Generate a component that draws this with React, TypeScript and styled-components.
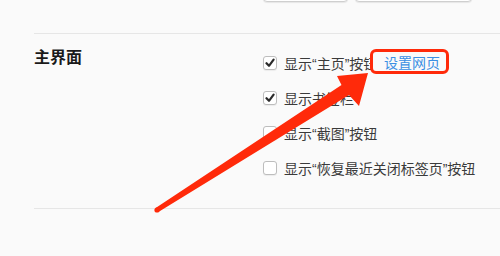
import styled, { createGlobalStyle } from 'styled-components';

const GlobalStyle = createGlobalStyle`
	html, body {
		margin: 0;
		padding: 0;
		background: #fafafa;
	}
	body {
		font-family: 'Liberation Sans', 'Noto Sans CJK SC', sans-serif;
		color: #333;
	}
`;

const options = [
	{ label: '显示“主页”按钮', checked: true, link: '设置网页' },
	{ label: '显示书签栏', checked: true },
	{ label: '显示“截图”按钮', checked: false },
	{ label: '显示“恢复最近关闭标签页”按钮', checked: false },
];

const Page = styled.div`
	position: relative;
	width: 500px;
	height: 256px;
	overflow: hidden;
`;

const TopRow = styled.div`
	display: flex;
	gap: 7px;
	padding-left: 263px;
	height: 33px;
`;

const TopButton = styled.div<{ $width: number }>`
	width: ${({ $width }) => $width}px;
	height: 24px;
	margin-top: -22px;
	box-sizing: border-box;
	background: #fff;
	border: 1px solid #cfcfcf;
	border-radius: 4px;
	box-shadow: 0 1px 1px rgba(0, 0, 0, 0.08);
`;

const Section = styled.section`
	display: flex;
	margin-left: 34px;
	padding: 11px 0 23px;
	border-top: 1px solid #e6e6e6;
	border-bottom: 1px solid #e6e6e6;
`;

const SectionTitle = styled.h2`
	width: 229px;
	margin: 0;
	padding-top: 3px;
	font-size: 16px;
	line-height: 20px;
	font-weight: 700;
	color: #1a1a1a;
`;

const OptionList = styled.div`
	display: flex;
	flex-direction: column;
`;

const OptionRow = styled.label`
	position: relative;
	display: flex;
	align-items: center;
	gap: 7px;
	height: 35px;
	font-size: 14px;
	color: #3a3a3a;
	white-space: nowrap;
`;

const CheckBox = styled.span<{ $checked: boolean }>`
	display: flex;
	align-items: center;
	justify-content: center;
	width: 14px;
	height: 14px;
	box-sizing: border-box;
	background: #fff;
	border: 1px solid #bdbdbd;
	border-radius: 3px;
	box-shadow: 0 1px 1px rgba(0, 0, 0, 0.06);
	svg {
		display: ${({ $checked }) => ($checked ? 'block' : 'none')};
	}
`;

const LinkBox = styled.a`
	position: absolute;
	left: 107px;
	top: 4px;
	height: 25px;
	box-sizing: border-box;
	display: flex;
	align-items: center;
	padding: 0 6px 0 11px;
	background: #fafafa;
	border: 3px solid #ff2a0a;
	border-radius: 6px;
	color: #3b8fe3;
	font-size: 14px;
	text-decoration: none;
`;

const Overlay = styled.svg`
	position: absolute;
	left: 0;
	top: 0;
	pointer-events: none;
`;

const Check = () => (
	<svg width='10' height='10' viewBox='0 0 10 10'>
		<path d='M1.5 5.2 L4 7.8 L8.6 1.6' fill='none' stroke='#2a2a2a' strokeWidth='2.2' strokeLinecap='round' strokeLinejoin='round' />
	</svg>
);

const App = () => {
	return (
		<Page>
			<GlobalStyle />
			<TopRow>
				<TopButton $width={85} />
				<TopButton $width={117} />
			</TopRow>
			<Section>
				<SectionTitle>主界面</SectionTitle>
				<OptionList>
					{options.map((option) => (
						<OptionRow key={option.label}>
							<CheckBox $checked={option.checked}>
								<Check />
							</CheckBox>
							{option.label}
							{option.link && <LinkBox href='#'>{option.link}</LinkBox>}
						</OptionRow>
					))}
				</OptionList>
			</Section>
			<Overlay width='500' height='256' viewBox='0 0 500 256'>
				<circle cx='157' cy='210' r='2.6' fill='#ff2a0a' />
				<polygon
					points='155.6,207.9 341.5,85 337,76 368,73 359,106 349,95 158.4,212.1'
					fill='#ff2a0a'
				/>
			</Overlay>
		</Page>
	);
};

export default App;
